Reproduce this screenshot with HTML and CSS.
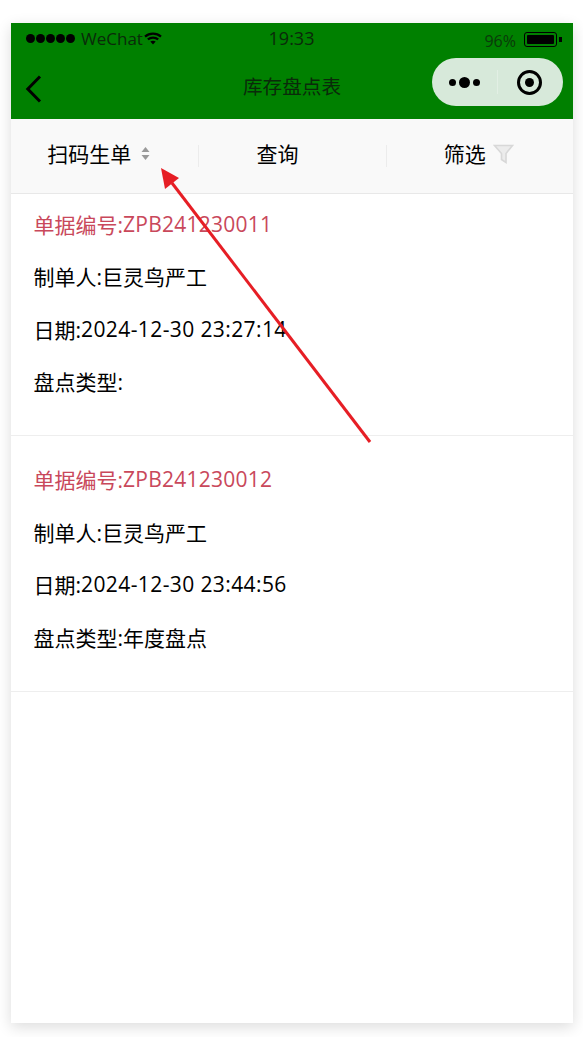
FILE: index.html
```html
<!DOCTYPE html>
<html lang="zh-CN">
  <head>
    <meta charset="UTF-8" />
    <title>库存盘点表</title>
    <link rel="stylesheet" href="styles.css">
  </head>
  <body>
    <div class="phone">
      <div class="header">
        <div class="status">
          <div class="status-left">
            <span class="signal"><i></i><i></i><i></i><i></i><i></i></span>
            <span class="carrier">WeChat</span>
            <svg class="wifi" width="18" height="13" viewBox="0 0 18 13">
              <path d="M1 4.6C5.6 0.6 12.4 0.6 17 4.6" fill="none" stroke="#000" stroke-width="2.2" />
              <path d="M3.8 7.4C6.8 4.9 11.2 4.9 14.2 7.4" fill="none" stroke="#000" stroke-width="2.2" />
              <path d="M6.3 9.6C8 8.4 10 8.4 11.7 9.6L9 12.4Z" fill="#000" />
            </svg>
          </div>
          <div class="time">19:33</div>
          <div class="status-right">
            <span class="percent">96%</span>
            <span class="battery"><b></b></span>
            <span class="battery-tip"></span>
          </div>
        </div>
        <div class="navbar">
          <svg class="back" width="18" height="30" viewBox="0 0 18 30">
            <path d="M15 2.5L2.8 15L15 27.5" fill="none" stroke="#000" stroke-width="3" />
          </svg>
          <div class="title">库存盘点表</div>
          <div class="capsule">
            <div class="capsule-more"><i></i><i class="big"></i><i></i></div>
            <div class="capsule-line"></div>
            <div class="capsule-target"><b></b></div>
          </div>
        </div>
      </div>

      <div class="tabs">
        <div class="tab tab-scan">
          扫码生单
          <svg class="sort" width="9" height="15" viewBox="0 0 9 15">
            <path d="M4.5 1L8.5 6H0.5Z" fill="#999" />
            <path d="M4.5 14L8.5 9H0.5Z" fill="#999" />
          </svg>
        </div>
        <div class="tab tab-line tab-query">查询</div>
        <div class="tab tab-line tab-filter">
          筛选
          <svg class="funnel" width="21" height="20" viewBox="0 0 21 20">
            <path d="M1.5 1.5H19.5L13 9.5V18.5L8.5 15.5V9.5Z" fill="#ececec" stroke="#d8d8d8" stroke-width="1.6" />
          </svg>
        </div>
      </div>

      <div class="item">
        <div class="row row-no">单据编号:<span class="num">ZPB241230011</span></div>
        <div class="row">制单人:巨灵鸟严工</div>
        <div class="row">日期:<span class="num">2024-12-30 23:27:14</span></div>
        <div class="row">盘点类型:</div>
      </div>
      <div class="item">
        <div class="row row-no">单据编号:<span class="num">ZPB241230012</span></div>
        <div class="row">制单人:巨灵鸟严工</div>
        <div class="row">日期:<span class="num">2024-12-30 23:44:56</span></div>
        <div class="row">盘点类型:年度盘点</div>
      </div>
    </div>

    <!-- 红色标注箭头 -->
    <svg class="arrow" width="583" height="1037" viewBox="0 0 583 1037">
      <path d="M370 442L172 183" fill="none" stroke="#e61e25" stroke-width="3" />
      <path d="M161 168L179 178L165 189Z" fill="#e61e25" />
    </svg>
  </body>
</html>
```
FILE: styles.css
```css
* {
  box-sizing: border-box;
}

body {
  margin: 0;
  height: 1037px;
  padding: 23px 10px 14px 11px;
  background: #fff;
  font-family: "Open Sans", "Noto Sans CJK SC", sans-serif;
  color: #000;
  overflow: hidden;
}

.phone {
  height: 1000px;
  background: #fff;
  box-shadow: 0 4px 14px rgba(0, 0, 0, 0.14);
}

/* 顶部绿色区域 */
.header {
  height: 96px;
  background: #008000;
}
.status {
  height: 30px;
  padding: 0 11px 0 15px;
  display: grid;
  grid-template-columns: 1fr auto 1fr;
  align-items: center;
}
.status-left,
.status-right {
  display: flex;
  align-items: center;
}
.status-right {
  justify-content: flex-end;
}
.signal {
  display: flex;
  gap: 1px;
}
.signal i {
  width: 9px;
  height: 9px;
  border-radius: 50%;
  background: #000;
}
.carrier {
  margin-left: 6px;
  font-size: 17px;
  color: #0a2a0a;
}
.wifi {
  margin-left: 1px;
}
.time {
  font-size: 18px;
  margin-right: 5px;
  color: #0a2a0a;
}
.percent {
  font-size: 16px;
  color: #0a3a0a;
  margin-top: 6px;
}
.battery {
  width: 33px;
  height: 15px;
  margin-left: 8px;
  margin-top: 2px;
  padding: 2px;
  border: 1px solid #000;
  border-radius: 3px;
}
.battery b {
  display: block;
  width: 27px;
  height: 100%;
  background: #000;
  border-radius: 1px;
}
.battery-tip {
  width: 3px;
  height: 5px;
  margin-left: 2px;
  margin-top: 2px;
  background: #000;
}

.navbar {
  height: 66px;
  padding: 0 10px 0 14px;
  position: relative;
  display: flex;
  align-items: center;
  justify-content: space-between;
}
.back {
  margin-top: 5px;
}
.title {
  position: absolute;
  left: 0;
  right: 0;
  top: 20px;
  text-align: center;
  font-size: 19.6px;
  line-height: 28px;
  color: #0a2a0a;
}
.capsule {
  width: 131px;
  height: 48px;
  margin-top: -8px;
  border-radius: 24px;
  background: #d7e9da;
  display: flex;
  align-items: center;
}
.capsule-more {
  width: 65px;
  display: flex;
  justify-content: center;
  align-items: center;
  gap: 3px;
}
.capsule-more i {
  width: 7px;
  height: 7px;
  border-radius: 50%;
  background: #000;
}
.capsule-more i.big {
  width: 11px;
  height: 11px;
}
.capsule-line {
  width: 1px;
  height: 24px;
  background: #e2efe4;
}
.capsule-target {
  flex: 1;
  padding-right: 3px;
  display: flex;
  justify-content: center;
}
.capsule-target b {
  width: 25px;
  height: 25px;
  border: 3px solid #000;
  border-radius: 50%;
  display: flex;
  align-items: center;
  justify-content: center;
}
.capsule-target b::after {
  content: "";
  width: 9px;
  height: 9px;
  border-radius: 50%;
  background: #000;
}

/* 操作栏 */
.tabs {
  height: 75px;
  background: #f9f9f9;
  border-bottom: 1px solid #e8e8e8;
  display: grid;
  grid-template-columns: repeat(3, 1fr);
  align-items: center;
}
.tab {
  height: 22px;
  padding-bottom: 5px;
  display: flex;
  align-items: center;
  justify-content: center;
  font-size: 21px;
  line-height: 20px;
}
.tab-line {
  border-left: 1px solid #ececec;
}
.tab-scan {
  padding-right: 12px;
}
.tab-query {
  padding-right: 30px;
}
.tab-filter {
  padding-right: 2px;
}
.sort {
  margin-left: 10px;
}
.funnel {
  margin-left: 7px;
}

/* 单据列表 */
.item {
  height: 242px;
  padding: 3.5px 22.5px 0;
  border-bottom: 1px solid #eee;
}
.item + .item {
  height: 256px;
  padding-top: 17px;
}
.row {
  height: 52.5px;
  display: flex;
  align-items: center;
  font-size: 21px;
  white-space: pre;
}
.row-no {
  color: #c9485b;
}
.num {
  letter-spacing: 0.4px;
}
.row-no .num {
  letter-spacing: 0.25px;
}

.arrow {
  position: absolute;
  left: 0;
  top: 0;
  pointer-events: none;
}
```
